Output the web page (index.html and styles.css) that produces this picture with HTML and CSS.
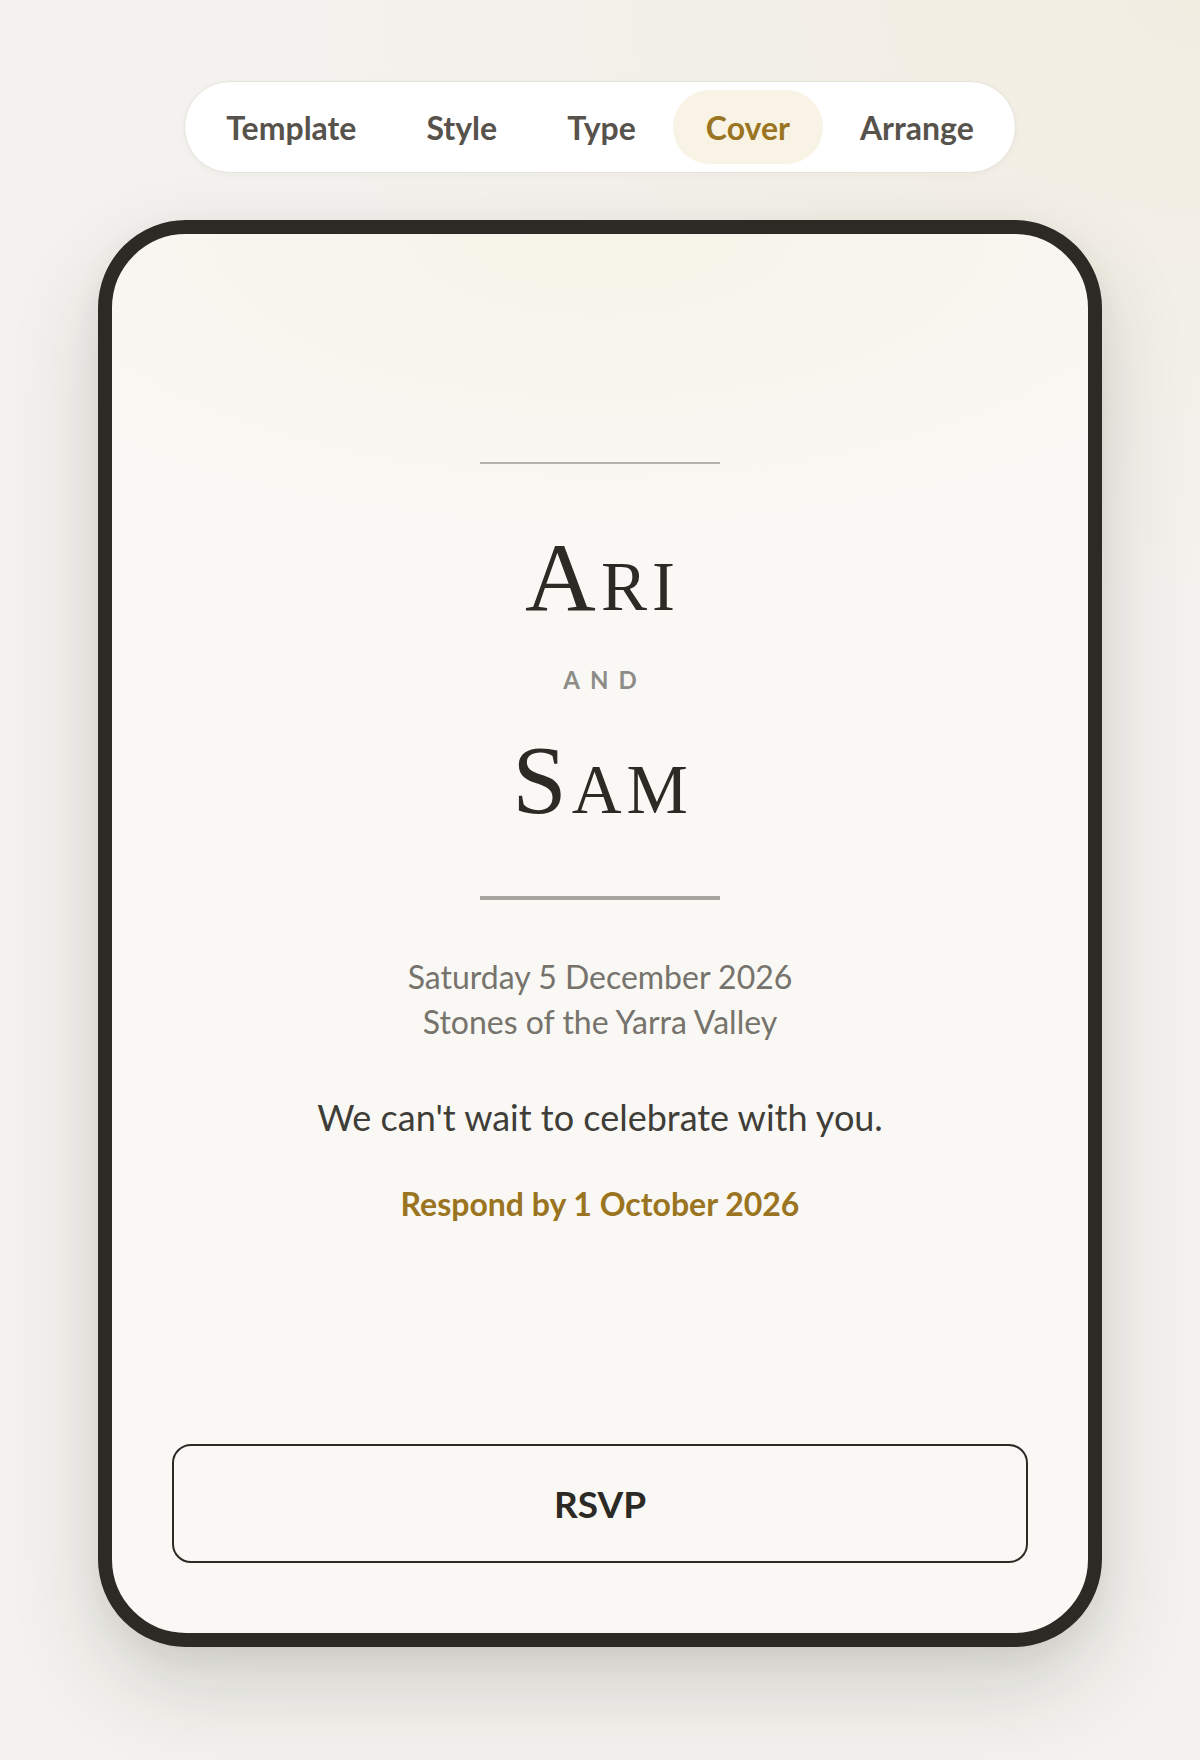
FILE: index.html
```html
<!DOCTYPE html>
<html lang="en">
<head>
    <meta charset="UTF-8">
    <meta name="viewport" content="width=device-width, initial-scale=1.0">
    <title>Invitation Cover</title>
    <link rel="stylesheet" href="styles.css">
</head>
<body>
    <div class="page">
        <nav class="tabs">
            <div class="tab">Template</div>
            <div class="tab">Style</div>
            <div class="tab">Type</div>
            <div class="tab active">Cover</div>
            <div class="tab">Arrange</div>
        </nav>

        <div class="card">
            <div class="cover">
                <div class="rule rule-top"></div>
                <div class="name">Ari</div>
                <div class="and">and</div>
                <div class="name name-second">Sam</div>
                <div class="rule rule-bottom"></div>

                <div class="details">
                    <div>Saturday 5 December 2026</div>
                    <div>Stones of the Yarra Valley</div>
                </div>
                <div class="message">We can't wait to celebrate with you.</div>
                <div class="respond">Respond by 1 October 2026</div>
            </div>
            <button class="rsvp-button">RSVP</button>
        </div>
    </div>
</body>
</html>
```

FILE: styles.css
```css
:root {
    --ink: #2c2a25;
    --muted: #76736c;
    --gold: #9a7420;
    --gold-soft: #f8f3e5;
    --rule: #a6a49e;
}
* {
    box-sizing: border-box;
}
body {
    margin: 0;
    padding: 0;
    font-family: "Lato", "Inter", sans-serif;
    background-color: #f3f2ee;
    background-image: radial-gradient(ellipse 900px 600px at 100% 0%, #f2ede1 0%, rgba(242, 237, 225, 0) 100%);
    min-height: 1760px;
    color: var(--ink);
}
.page {
    display: flex;
    flex-direction: column;
    align-items: center;
    padding-top: 81px;
}
.tabs {
    display: flex;
    gap: 4px;
    padding: 8px;
    background: #ffffff;
    border: 1px solid #e6e3dc;
    border-radius: 46px;
    box-shadow: 0 2px 6px rgba(60, 50, 30, 0.04);
}
.tab {
    height: 74px;
    padding: 0 33px;
    border-radius: 37px;
    display: flex;
    align-items: center;
    font-size: 32px;
    font-weight: 700;
    color: #57534c;
}
.tab.active {
    background: var(--gold-soft);
    color: var(--gold);
}
.card {
    margin-top: 47px;
    width: 1004px;
    height: 1427px;
    border: 14px solid var(--ink);
    border-radius: 88px;
    background-color: #f9f8f4;
    background-image: radial-gradient(ellipse 700px 300px at 50% 0%, #f6f3e8 0%, rgba(246, 243, 232, 0) 100%);
    box-shadow: 0 40px 90px rgba(40, 35, 25, 0.16), 0 10px 30px rgba(40, 35, 25, 0.06);
    display: flex;
    flex-direction: column;
    padding: 0 60px 70px;
}
.cover {
    display: flex;
    flex-direction: column;
    align-items: center;
    text-align: center;
    padding-top: 228px;
}
.rule {
    width: 240px;
    background: var(--rule);
}
.rule-top {
    height: 2px;
    opacity: 0.85;
}
.rule-bottom {
    height: 4px;
}
.name {
    font-family: "Liberation Serif", "DejaVu Serif", serif;
    font-variant: small-caps;
    font-size: 98px;
    line-height: 1;
    letter-spacing: 5px;
    margin-right: -5px;
    margin-top: 64px;
    color: var(--ink);
}
.name-second {
    margin-top: 39px;
    margin-bottom: 67px;
}
.and {
    margin-top: 42px;
    font-size: 24px;
    line-height: 1;
    font-weight: 700;
    text-transform: uppercase;
    letter-spacing: 0.42em;
    margin-right: -0.42em;
    color: #8e8c87;
}
.details {
    margin-top: 54px;
    font-size: 32px;
    line-height: 45px;
    color: var(--muted);
}
.message {
    margin-top: 49px;
    font-size: 36px;
    line-height: 48px;
    color: #3f3d38;
}
.respond {
    margin-top: 40px;
    font-size: 32px;
    line-height: 45px;
    font-weight: 700;
    color: var(--gold);
}
.rsvp-button {
    margin-top: auto;
    height: 119px;
    width: 100%;
    background: transparent;
    border: 2px solid var(--ink);
    border-radius: 19px;
    font-family: "Lato", "Inter", sans-serif;
    font-size: 37px;
    font-weight: 700;
    color: var(--ink);
    cursor: pointer;
}
```
